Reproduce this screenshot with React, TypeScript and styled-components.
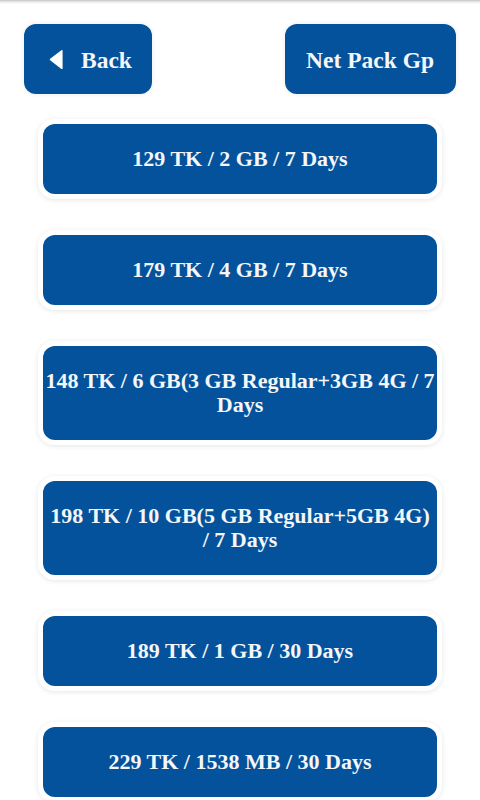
import React from "react";
import styled, { createGlobalStyle } from "styled-components";

const GlobalStyle = createGlobalStyle`
    html, body {
        margin: 0;
        padding: 0;
        background: #ffffff;
    }
    body {
        font-family: "Liberation Serif", "Times New Roman", serif;
    }
`;

const packs = [
    "129 TK / 2 GB / 7 Days",
    "179 TK / 4 GB / 7 Days",
    "148 TK / 6 GB(3 GB Regular+3GB 4G / 7 Days",
    "198 TK / 10 GB(5 GB Regular+5GB 4G) / 7 Days",
    "189 TK / 1 GB / 30 Days",
    "229 TK / 1538 MB / 30 Days",
];

export default function App() {
    return (
        <Page>
            <GlobalStyle />
            <TopShadow />
            <HeaderRow>
                <HeaderButton $padLeft={25} $padRight={20}>
                    <BackArrow viewBox="0 0 16 22">
                        <path
                            d="M14.5 1.5 C14.5 0.8 13.8 0.5 13.2 1 L1.2 10.2 C0.6 10.7 0.6 11.3 1.2 11.8 L13.2 21 C13.8 21.5 14.5 21.2 14.5 20.5 Z"
                            fill="#ffffff"
                        />
                    </BackArrow>
                    Back
                </HeaderButton>
                <HeaderButton $padLeft={21} $padRight={22}>
                    Net Pack Gp
                </HeaderButton>
            </HeaderRow>

            <PackList>
                {packs.map((pack, idx) => (
                    <PackCard key={idx}>
                        <PackButton>{pack}</PackButton>
                    </PackCard>
                ))}
            </PackList>
        </Page>
    );
}

const Page = styled.div`
    width: 480px;
    min-height: 800px;
    background: #ffffff;
    overflow: hidden;
`;

const TopShadow = styled.div`
    height: 4px;
    background: linear-gradient(#c4c4c4, #ececec 50%, #ffffff);
`;

const HeaderRow = styled.header`
    display: flex;
    justify-content: space-between;
    align-items: center;
    padding: 20px 24px 0 24px;
`;

const HeaderButton = styled.button<{ $padLeft: number; $padRight: number }>`
    display: flex;
    align-items: center;
    height: 70px;
    padding: 3px ${({ $padRight }) => $padRight}px 0 ${({ $padLeft }) => $padLeft}px;
    border: none;
    border-radius: 12px;
    background: #04529c;
    color: #f4f6f8;
    font-family: "Liberation Serif", "Times New Roman", serif;
    font-weight: 700;
    font-size: 23.5px;
    box-shadow: 0 0 4px 1px rgba(0, 0, 0, 0.06);
    cursor: pointer;
`;

const BackArrow = styled.svg`
    width: 15px;
    height: 21px;
    margin: -3px 17px 0 0;
`;

const PackList = styled.div`
    display: flex;
    flex-direction: column;
    gap: 31px;
    padding: 25px 38px 0 38px;
`;

const PackCard = styled.div`
    padding: 5px;
    border-radius: 16px;
    background: #ffffff;
    box-shadow: 0 1px 5px rgba(0, 0, 0, 0.1);
`;

const PackButton = styled.button`
    display: block;
    width: 100%;
    padding: 23px 1.5px;
    border: none;
    border-radius: 12px;
    background: #04529c;
    color: #f4f6f8;
    font-family: "Liberation Serif", "Times New Roman", serif;
    font-weight: 700;
    font-size: 22px;
    line-height: 24px;
    text-align: center;
    cursor: pointer;
`;
